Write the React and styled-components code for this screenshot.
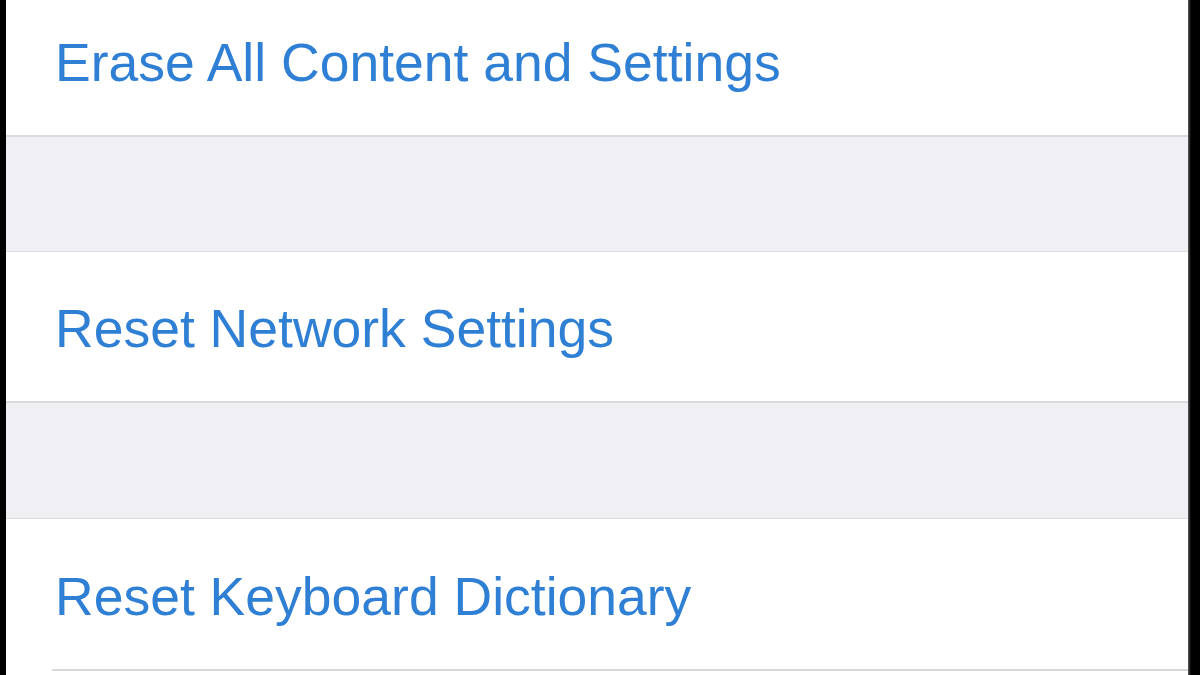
import React from "react";
import styled, { createGlobalStyle } from "styled-components";

const Global = createGlobalStyle`
  html, body { margin: 0; padding: 0; background: #000; }
  body { width: 1200px; height: 675px; overflow: hidden; }
`;

const Frame = styled.div`
  width: 1200px;
  height: 675px;
  box-sizing: border-box;
  padding: 0 12px 0 6px;
  background: linear-gradient(to right, #000 0, #000 1187px, #8a8a8a 1187px, #3a3a3a 1189px, #000 1191px);
  overflow: hidden;
`;

const Screen = styled.div`
  height: 100%;
  background: #fff;
  display: flex;
  flex-direction: column;
`;

const Cell = styled.div`
  height: ${(p) => p.$h}px;
  box-sizing: border-box;
  padding-left: 49px;
  padding-top: ${(p) => p.$pt || 0}px;
  padding-bottom: ${(p) => p.$pb || 0}px;
  display: flex;
  align-items: center;
  background: #fff;
  flex-shrink: 0;
`;

const Label = styled.span`
  font-family: "Liberation Sans", Arial, sans-serif;
  font-size: 53.5px;
  color: #2f80d4;
  white-space: nowrap;
`;

const Gap = styled.div`
  height: ${(p) => p.$h}px;
  background: #efeff4;
  border-top: 2px solid #d9d9de;
  border-bottom: 1px solid #dcdce0;
  flex-shrink: 0;
`;

const Inset = styled.div`
  height: 2px;
  margin-left: 46px;
  background: #d8d8dc;
  flex-shrink: 0;
`;

export default function App() {
  return (
    <>
      <Global />
      <Frame>
        <Screen>
          <Cell $h={135} $pb={10}>
            <Label>Erase All Content and Settings</Label>
          </Cell>
          <Gap $h={114} />
          <Cell $h={149} $pt={4}>
            <Label>Reset Network Settings</Label>
          </Cell>
          <Gap $h={115} />
          <Cell $h={150} $pt={4}>
            <Label>Reset Keyboard Dictionary</Label>
          </Cell>
          <Inset />
        </Screen>
      </Frame>
    </>
  );
}
